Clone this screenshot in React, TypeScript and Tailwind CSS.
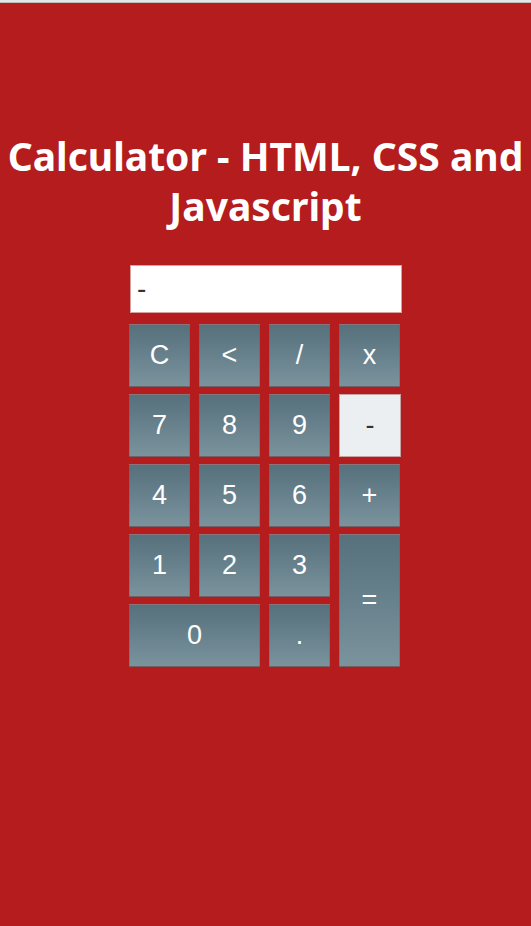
import React from "react";

const keys: { label: string; cls?: string; active?: boolean }[] = [
  { label: "C" },
  { label: "<" },
  { label: "/" },
  { label: "x" },
  { label: "7" },
  { label: "8" },
  { label: "9" },
  { label: "-", active: true },
  { label: "4" },
  { label: "5" },
  { label: "6" },
  { label: "+" },
  { label: "1" },
  { label: "2" },
  { label: "3" },
  { label: "=", cls: "row-span-2 h-auto" },
  { label: "0", cls: "col-span-2 w-auto" },
  { label: "." },
];

export default function App() {
  return (
    <div className="min-h-[926px] w-full bg-[#b51c1e] flex flex-col">
      <div className="h-[3px] bg-[#e5e5e5] border-b border-[#bdbdbd]" />
      <h1 className="mt-[128px] text-center text-white font-bold text-[39px] leading-[50px] font-['Noto_Sans',sans-serif]">
        Calculator - HTML, CSS and Javascript
      </h1>
      <div className="mt-[34px] w-[273px] ml-[129px] flex flex-col">
        <div className="ml-[1px] h-[48px] w-[272px] bg-white border border-[#d9a0a0] flex items-center px-[6px] text-[28px] text-[#333] font-['Liberation_Sans',Arial,sans-serif]">
          -
        </div>
        <div className="mt-[11px] grid grid-cols-[61px_61px_61px_61px] grid-rows-[63px_63px_63px_63px_63px] gap-x-[9px] gap-y-[7px] font-['Liberation_Sans',Arial,sans-serif]">
          {keys.map((k) => (
            <button
              key={k.label}
              className={
                "flex items-center justify-center text-[27px] border " +
                (k.active
                  ? "bg-[#eceff1] text-[#333] border-[#c9a3a3] w-[62px]"
                  : "bg-gradient-to-b from-[#56707c] to-[#7a939d] text-white border-[#9a4a4a]/40") +
                " " +
                (k.cls ?? "")
              }
            >
              {k.label}
            </button>
          ))}
        </div>
      </div>
    </div>
  );
}
